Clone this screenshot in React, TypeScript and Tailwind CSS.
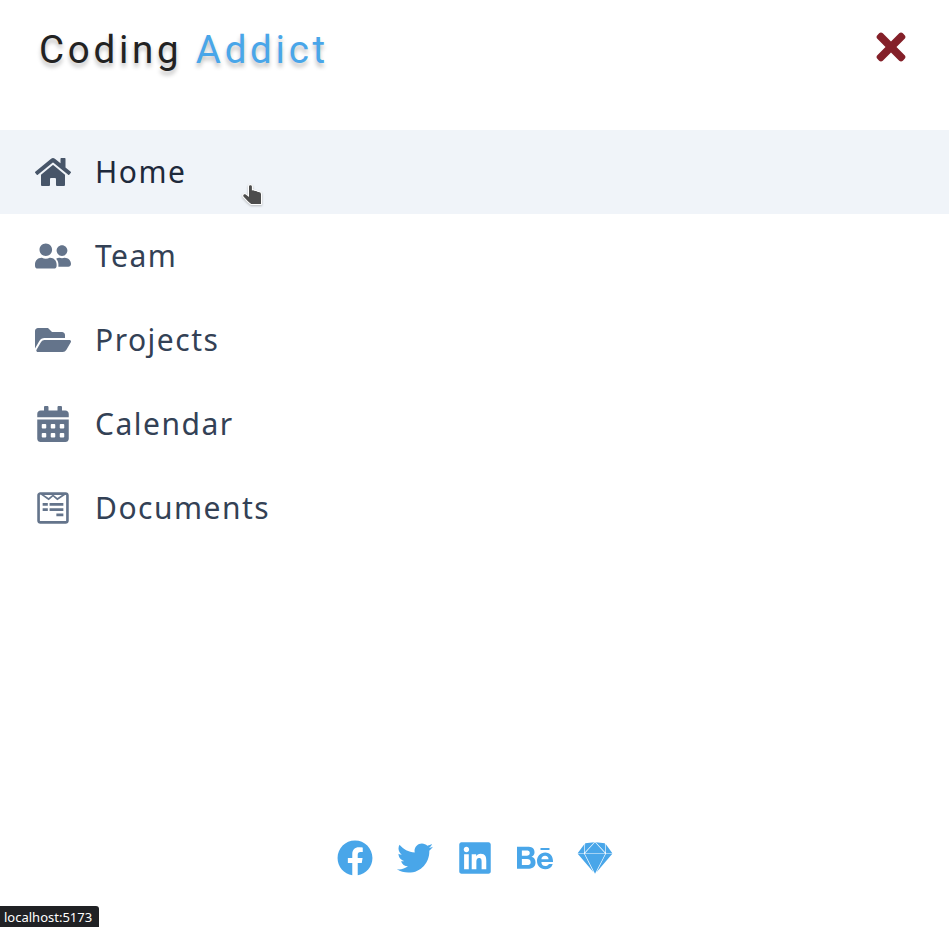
import { FaHome, FaUserFriends, FaFolderOpen, FaCalendarAlt, FaWpforms, FaTimes, FaFacebook, FaTwitter, FaLinkedin, FaBehance, FaSketch } from 'react-icons/fa';

const links = [
  { text: 'Home', Icon: FaHome },
  { text: 'Team', Icon: FaUserFriends },
  { text: 'Projects', Icon: FaFolderOpen },
  { text: 'Calendar', Icon: FaCalendarAlt },
  { text: 'Documents', Icon: FaWpforms },
];
const social = [FaFacebook, FaTwitter, FaLinkedin, FaBehance, FaSketch];

export default function App() {
  return (
    <aside className="relative flex h-[927px] w-full flex-col justify-between overflow-hidden bg-white font-['Noto_Sans',sans-serif]">
      <div>
        <header className="flex h-[130px] items-start justify-between pl-[39px] pr-[37px]">
          <h1 className="pt-[25px] font-['Roboto',sans-serif] text-[38.5px] leading-[50px] tracking-[3.75px] text-[#222] [text-shadow:0px_4px_4px_rgba(0,0,0,0.25)]">
            Coding <span className="text-[#49a6e9]">Addict</span>
          </h1>
          <button className="mt-[26px] text-[42px] text-[#842029]"><FaTimes /></button>
        </header>
        <ul>
          {links.map(({ text, Icon }, i) => (
            <li key={text}>
              <a className={`flex h-[84px] items-center pl-[35px] text-[30px] tracking-[1.5px] ${i === 0 ? 'bg-[#f0f4f9] text-[#1e293b]' : 'text-[#334155]'}`}>
                <Icon className={`mr-6 text-[36px] ${i === 0 ? 'text-[#475569]' : 'text-[#64748b]'}`} />
                <span className="pb-[2px]">{text}</span>
              </a>
            </li>
          ))}
        </ul>
      </div>
      <div className="mb-[51px] flex justify-center gap-6">
        {social.map((Icon, i) => <Icon key={i} className="text-[36px] text-[#49a6e9]" />)}
      </div>
      <svg className="absolute left-[240px] top-[181px] drop-shadow-[0_1px_1px_rgba(0,0,0,0.25)]" width="26" height="28" viewBox="0 0 26 28">
        <path d="M9 5.5C9 3.8 11.8 3.8 11.9 5.5V9.5Q13.5 8.9 14.8 10.1Q16.5 9.7 17.8 11.1Q20.9 10.8 21 13V23H11.2L8.2 20.5L3.5 15.5C2.7 13.9 4.2 12.7 5.7 13.6L9 16Z" fill="#4d4d4d" stroke="white" strokeWidth="2" paintOrder="stroke" strokeLinejoin="round" />
      </svg>
      <div className="absolute bottom-0 left-0 flex h-[21px] w-[99px] items-center rounded-tr-[3px] bg-[#202124] pl-1 pt-[2px] text-[13px] text-white">localhost:5173</div>
    </aside>
  );
}
